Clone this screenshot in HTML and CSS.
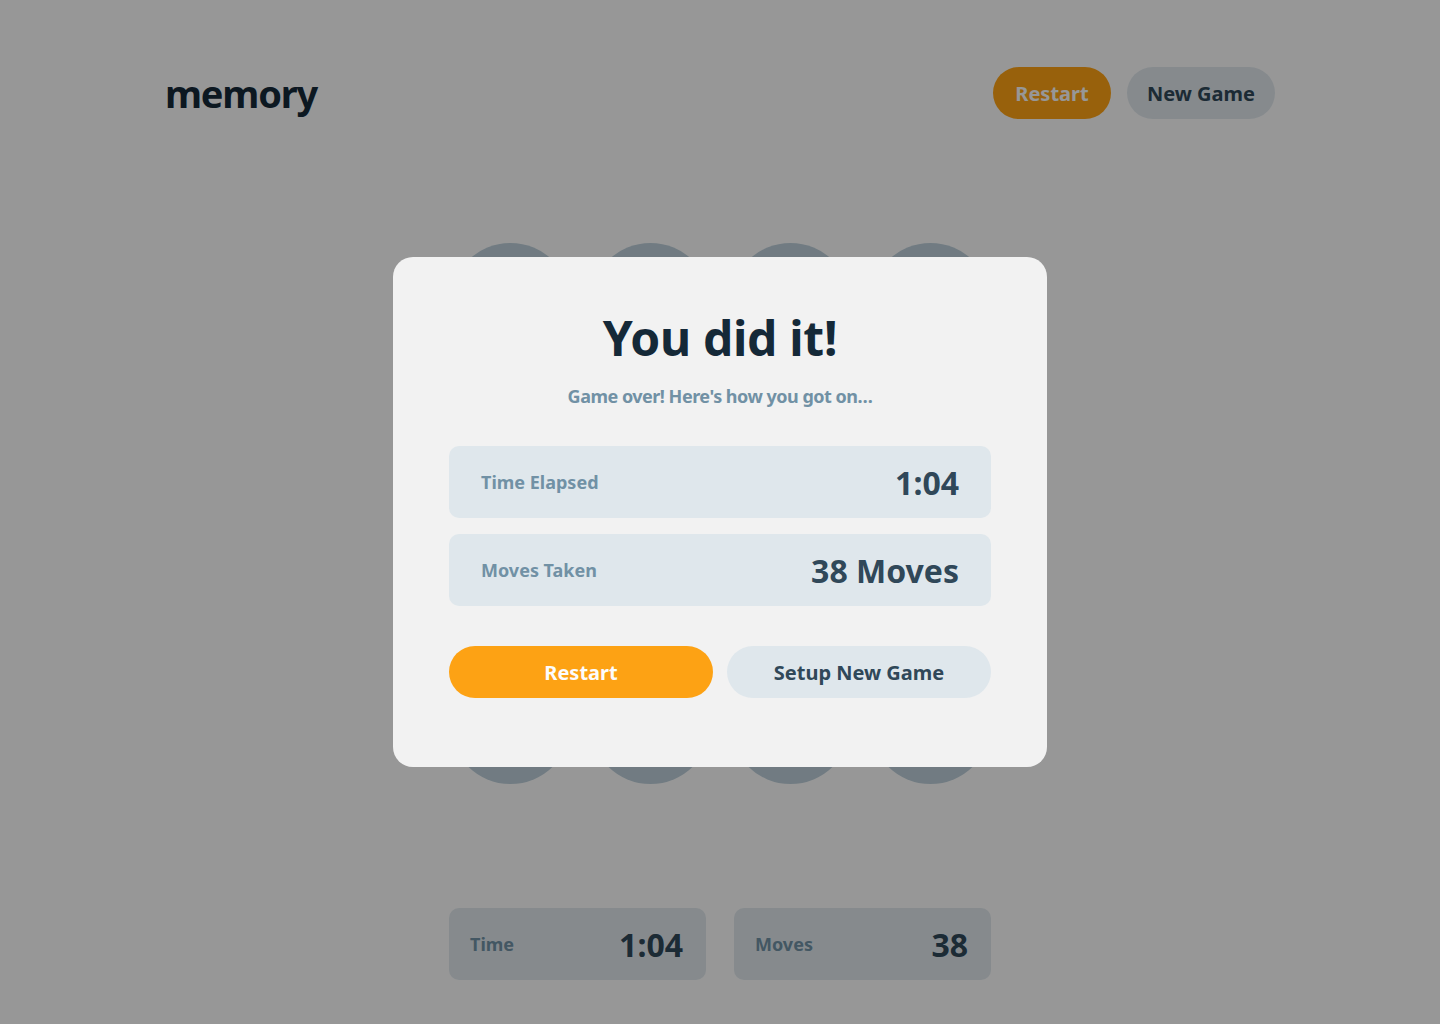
FILE: index.html
```html
<!DOCTYPE html>
<html lang="en">
<head>
<meta charset="utf-8">
<title>memory</title>
<link rel="stylesheet" href="styles.css">
</head>
<body>
<div class="page">
  <header class="header">
    <h1 class="logo">memory</h1>
    <div class="header-actions">
      <button class="btn btn-primary btn-header">Restart</button>
      <button class="btn btn-secondary btn-header">New Game</button>
    </div>
  </header>
  <main class="board">
    <div class="grid">
      <div class="tile"></div><div class="tile"></div><div class="tile"></div><div class="tile"></div>
      <div class="tile"></div><div class="tile"></div><div class="tile"></div><div class="tile"></div>
      <div class="tile"></div><div class="tile"></div><div class="tile"></div><div class="tile"></div>
      <div class="tile"></div><div class="tile"></div><div class="tile"></div><div class="tile"></div>
    </div>
  </main>
  <footer class="stats">
    <div class="stat"><span class="stat-label">Time</span><span class="stat-value">1:04</span></div>
    <div class="stat"><span class="stat-label">Moves</span><span class="stat-value">38</span></div>
  </footer>
</div>
<div class="overlay">
  <div class="modal">
    <h2 class="modal-title">You did it!</h2>
    <p class="modal-sub">Game over! Here's how you got on…</p>
    <div class="result-list">
      <div class="result"><span class="result-label">Time Elapsed</span><span class="result-value">1:04</span></div>
      <div class="result"><span class="result-label">Moves Taken</span><span class="result-value">38 Moves</span></div>
    </div>
    <div class="modal-actions">
      <button class="btn btn-primary btn-modal">Restart</button>
      <button class="btn btn-secondary btn-modal">Setup New Game</button>
    </div>
  </div>
</div>
</body>
</html>
```
FILE: styles.css
```css
* { box-sizing: border-box; }
html, body { margin: 0; padding: 0; }
body {
  background: #FCFCFC;
  font-family: "Noto Sans", "Liberation Sans", sans-serif;
  font-weight: 700;
  color: #152938;
  width: 1440px;
  height: 1024px;
  overflow: hidden;
}
.page {
  width: 1110px;
  margin: 0 auto;
  padding-top: 67px;
}
.header {
  display: flex;
  align-items: center;
  justify-content: space-between;
  height: 52px;
}
.logo {
  margin: 0;
  font-size: 38px;
  line-height: 52px;
  font-weight: 700;
  color: #152938;
  letter-spacing: -1.2px;
}
.header-actions { display: flex; gap: 16px; }
.btn {
  border: none;
  border-radius: 26px;
  font-family: inherit;
  font-weight: 700;
  height: 52px;
  font-size: 20px;
  white-space: nowrap;
  padding: 0;
  cursor: pointer;
}
.btn-primary { background: #FDA214; color: #FCFCFC; }
.btn-secondary { background: #DFE7EC; color: #304859; }
.btn-header.btn-primary { width: 118px; }
.btn-header.btn-secondary { width: 148px; }
.board {
  display: flex;
  justify-content: center;
  padding-top: 124px;
}
.grid {
  display: grid;
  grid-template-columns: repeat(4, 121px);
  gap: 19px;
}
.tile {
  width: 121px;
  height: 121px;
  border-radius: 50%;
  background: #BCCED9;
}
.stats {
  display: flex;
  justify-content: center;
  gap: 28px;
  margin-top: 124px;
}
.stat {
  width: 257px;
  height: 72px;
  border-radius: 10px;
  background: #DFE7EC;
  display: flex;
  align-items: center;
  justify-content: space-between;
  padding: 0 23px 0 21px;
}
.stat-label { font-size: 18px; color: #7191A5; }
.stat-value { font-size: 32px; color: #304859; }
.overlay {
  position: fixed;
  inset: 0;
  background: rgba(0, 0, 0, 0.4);
  display: flex;
  align-items: center;
  justify-content: center;
}
.modal {
  width: 654px;
  height: 510px;
  background: #F2F2F2;
  border-radius: 20px;
  padding: 51px 56px 0;
  display: flex;
  flex-direction: column;
}
.modal-title {
  margin: 0;
  text-align: center;
  font-size: 48px;
  line-height: 60px;
  letter-spacing: -0.3px;
  color: #152938;
}
.modal-sub {
  margin: 17px 0 0;
  text-align: center;
  font-size: 18px;
  line-height: 22px;
  letter-spacing: -0.5px;
  color: #7191A5;
}
.result-list {
  margin-top: 39px;
  display: flex;
  flex-direction: column;
  gap: 16px;
}
.result {
  height: 72px;
  border-radius: 10px;
  background: #DFE7EC;
  display: flex;
  align-items: center;
  justify-content: space-between;
  padding: 0 32px;
}
.result-label { font-size: 18px; color: #7191A5; }
.result-value { font-size: 32px; color: #304859; }
.modal-actions {
  margin-top: 40px;
  display: flex;
  gap: 14px;
}
.btn-modal { flex: 1; }
```
